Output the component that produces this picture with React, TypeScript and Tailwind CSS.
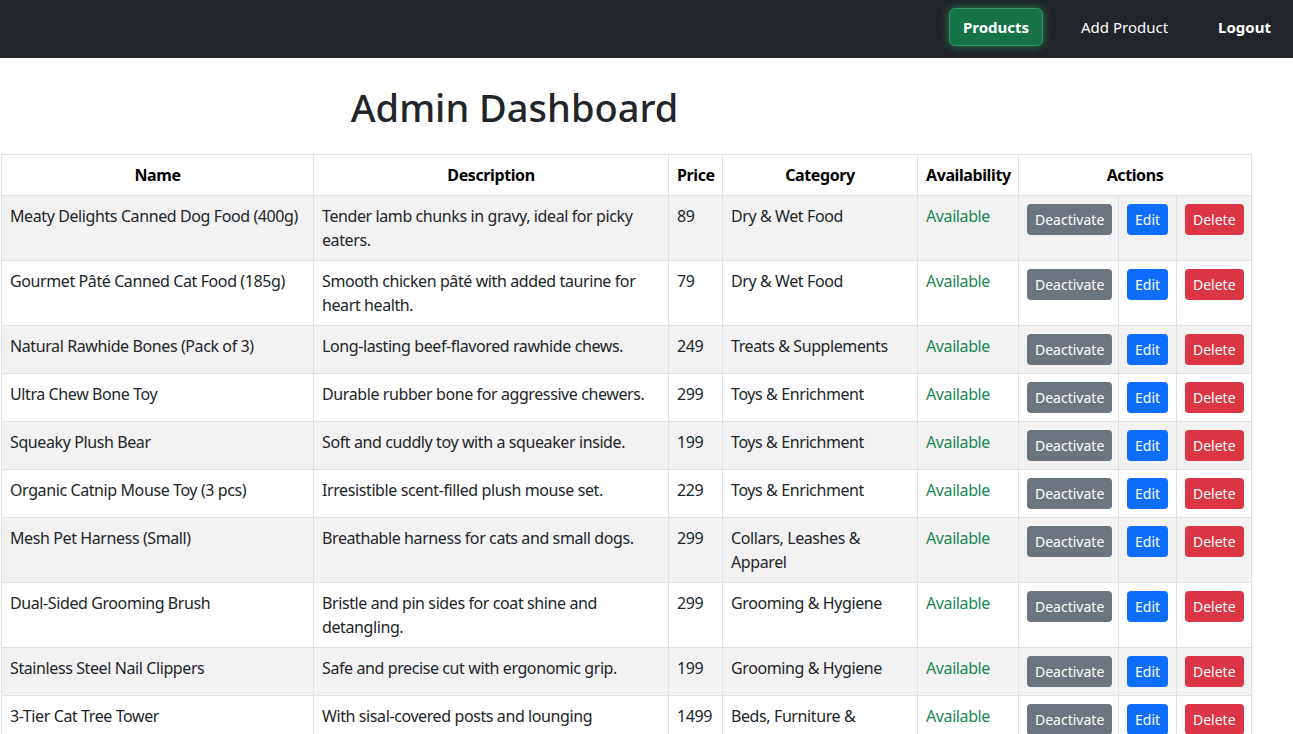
const products = [
  { name: 'Meaty Delights Canned Dog Food (400g)', desc: 'Tender lamb chunks in gravy, ideal for picky eaters.', price: 89, category: 'Dry & Wet Food' },
  { name: 'Gourmet Pâté Canned Cat Food (185g)', desc: 'Smooth chicken pâté with added taurine for heart health.', price: 79, category: 'Dry & Wet Food' },
  { name: 'Natural Rawhide Bones (Pack of 3)', desc: 'Long-lasting beef-flavored rawhide chews.', price: 249, category: 'Treats & Supplements' },
  { name: 'Ultra Chew Bone Toy', desc: 'Durable rubber bone for aggressive chewers.', price: 299, category: 'Toys & Enrichment' },
  { name: 'Squeaky Plush Bear', desc: 'Soft and cuddly toy with a squeaker inside.', price: 199, category: 'Toys & Enrichment' },
  { name: 'Organic Catnip Mouse Toy (3 pcs)', desc: 'Irresistible scent-filled plush mouse set.', price: 229, category: 'Toys & Enrichment' },
  { name: 'Mesh Pet Harness (Small)', desc: 'Breathable harness for cats and small dogs.', price: 299, category: 'Collars, Leashes & Apparel' },
  { name: 'Dual-Sided Grooming Brush', desc: 'Bristle and pin sides for coat shine and detangling.', price: 299, category: 'Grooming & Hygiene' },
  { name: 'Stainless Steel Nail Clippers', desc: 'Safe and precise cut with ergonomic grip.', price: 199, category: 'Grooming & Hygiene' },
  { name: '3-Tier Cat Tree Tower', desc: 'With sisal-covered posts and lounging platforms.', price: 1499, category: 'Beds, Furniture & Habitats' },
];

export default function App() {
  return (
    <div className="min-h-screen bg-white text-[#212529] text-[16px] leading-6 [font-family:'Noto_Sans',sans-serif]">
      {/* top bar */}
      <nav className="h-[58px] bg-[#212529] flex items-start pt-2 justify-end pr-[22px]">
        <button className="h-[38px] w-[94px] rounded-md bg-[#157347] border border-[#2f9a63] text-white font-bold text-[15px] shadow-[0_0_8px_rgba(40,200,110,0.55)]">
          Products
        </button>
        <a className="ml-[38px] mt-[7px] text-white text-[15px]">Add Product</a>
        <a className="ml-[50px] mt-[7px] text-white font-bold text-[15px]">Logout</a>
      </nav>

      {/* heading */}
      <div className="w-[1029px] text-center pt-[25px] pb-[23px]">
        <h1 className="text-[38px] leading-[48px] font-medium">Admin Dashboard</h1>
      </div>

      <table className="w-[1251px] table-fixed border-collapse border border-[#dee2e6] ml-px tracking-[-0.4px]">
        <colgroup>
          <col className="w-[312px]" />
          <col className="w-[355px]" />
          <col className="w-[54px]" />
          <col className="w-[195px]" />
          <col className="w-[101px]" />
          <col className="w-[100px]" />
          <col className="w-[58px]" />
          <col className="w-[75px]" />
        </colgroup>
        <thead>
          <tr>
            {['Name', 'Description', 'Price', 'Category', 'Availability'].map((h) => (
              <th key={h} className="border border-[#dee2e6] p-2 font-bold text-black text-center">
                {h}
              </th>
            ))}
            <th colSpan={3} className="border border-[#dee2e6] p-2 font-bold text-black text-center">
              Actions
            </th>
          </tr>
        </thead>
        <tbody>
          {products.map((p, i) => (
            <tr key={p.name} className={i % 2 === 0 ? 'bg-[#f2f2f2]' : 'bg-white'}>
              <td className="border border-[#dee2e6] p-2 align-top">{p.name}</td>
              <td className="border border-[#dee2e6] p-2 align-top">{p.desc}</td>
              <td className="border border-[#dee2e6] p-2 align-top">{p.price}</td>
              <td className="border border-[#dee2e6] p-2 align-top">{p.category}</td>
              <td className="border border-[#dee2e6] p-2 align-top text-[#198754]">Available</td>
              <td className="border border-[#dee2e6] p-2 align-top">
                <button className="h-[31px] px-2 rounded bg-[#6c757d] text-white text-[14px] tracking-normal">Deactivate</button>
              </td>
              <td className="border border-[#dee2e6] p-2 align-top">
                <button className="h-[31px] px-2 rounded bg-[#0d6efd] text-white text-[14px] tracking-normal">Edit</button>
              </td>
              <td className="border border-[#dee2e6] p-2 align-top">
                <button className="h-[31px] px-2 rounded bg-[#dc3545] text-white text-[14px] tracking-normal">Delete</button>
              </td>
            </tr>
          ))}
        </tbody>
      </table>
    </div>
  );
}
